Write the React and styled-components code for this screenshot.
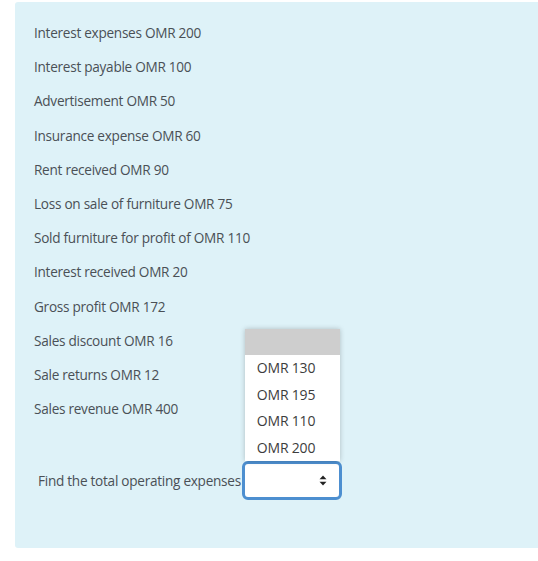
import React from "react";
import styled, { createGlobalStyle } from "styled-components";

const Global = createGlobalStyle`
  html, body { margin: 0; padding: 0; background: #fff; }
  body { font-family: "Open Sans", "Noto Sans", sans-serif; }
`;

const Panel = styled.div`
  margin: 2px 0 0 15px;
  width: 523px;
  height: 546px;
  box-sizing: border-box;
  background: #def2f8;
  border-radius: 3px 0 0 3px;
  padding: 20px 0 0 19px;
  display: flex;
  flex-direction: column;
  color: #4a5056;
  font-size: 13.6px;
  letter-spacing: -0.27px;
`;

const Lines = styled.div`
  display: flex;
  flex-direction: column;
  gap: 12.2px;
`;

const Line = styled.div`
  line-height: 22px;
  white-space: nowrap;
`;

const QuestionRow = styled.div`
  margin-top: 41px;
  margin-left: 4px;
  display: flex;
  align-items: center;
`;

const Label = styled.span`
  line-height: 22px;
  white-space: nowrap;
`;

const SelectWrap = styled.div`
  position: relative;
  margin-left: 1px;
`;

const SelectBox = styled.div`
  width: 100px;
  height: 39px;
  box-sizing: border-box;
  border: 3px solid #4d8fd0;
  border-radius: 6px;
  background: #fff;
  display: flex;
  align-items: center;
  justify-content: flex-end;
  padding-right: 12px;
`;

const Menu = styled.div`
  position: absolute;
  left: 3px;
  bottom: 100%;
  width: 95px;
  background: #fff;
  box-shadow: 0 0 5px rgba(0, 0, 0, 0.22);
  display: flex;
  flex-direction: column;
`;

const Option = styled.div`
  height: ${(p) => (p.$blank ? "26px" : "26.5px")};
  line-height: 26.5px;
  padding-left: 12px;
  background: ${(p) => (p.$blank ? "#cecece" : "#fff")};
  color: #3d3d3d;
  font-size: 14px;
  letter-spacing: -0.2px;
`;

const lines = [
  "Interest expenses OMR 200",
  "Interest payable OMR 100",
  "Advertisement OMR 50",
  "Insurance expense OMR 60",
  "Rent received OMR 90",
  "Loss on sale of furniture OMR 75",
  "Sold furniture for profit of OMR 110",
  "Interest received OMR 20",
  "Gross profit OMR 172",
  "Sales discount OMR 16",
  "Sale returns OMR 12",
  "Sales revenue OMR 400",
];

const options = ["OMR 130", "OMR 195", "OMR 110", "OMR 200"];

function Arrows() {
  return (
    <svg width="8" height="11" viewBox="0 0 8 11">
      <path d="M4 0.5 L7.5 4.2 H0.5 Z" fill="#222" />
      <path d="M4 10.5 L7.5 6.8 H0.5 Z" fill="#222" />
    </svg>
  );
}

export default function App() {
  return (
    <>
      <Global />
      <Panel>
        <Lines>
          {lines.map((l) => (
            <Line key={l}>{l}</Line>
          ))}
        </Lines>
        <QuestionRow>
          <Label>Find the total operating expenses</Label>
          <SelectWrap>
            <SelectBox>
              <Arrows />
            </SelectBox>
            <Menu>
              <Option $blank />
              {options.map((o) => (
                <Option key={o}>{o}</Option>
              ))}
            </Menu>
          </SelectWrap>
        </QuestionRow>
      </Panel>
    </>
  );
}
